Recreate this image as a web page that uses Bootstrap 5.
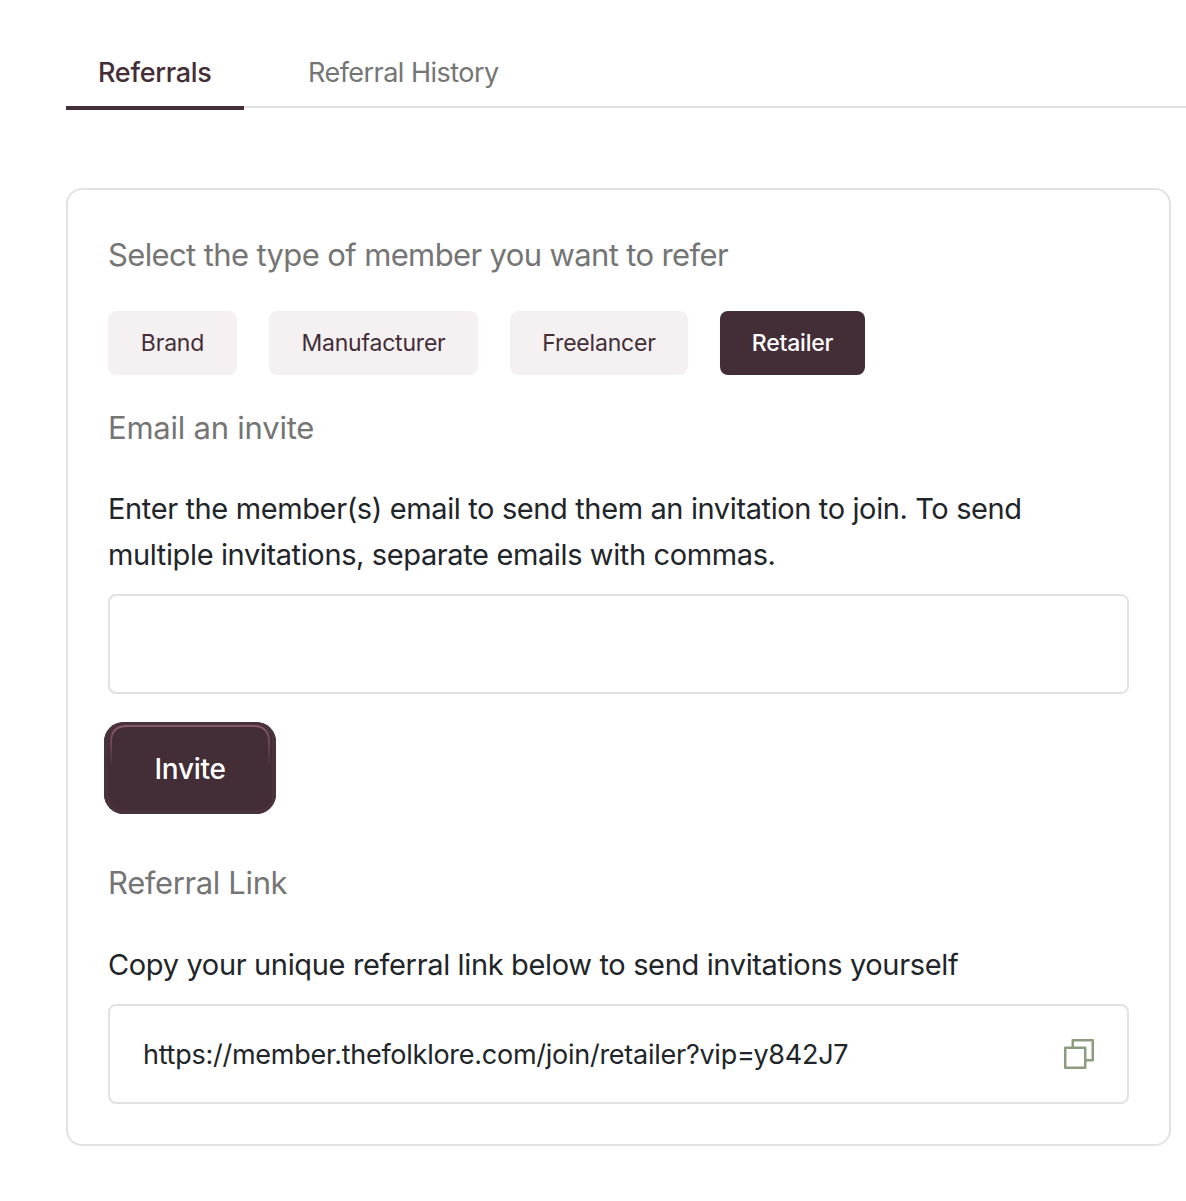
<!DOCTYPE html>
<html lang="en">
<head>
<meta charset="utf-8">
<meta name="viewport" content="width=device-width, initial-scale=1">
<title>Referrals</title>
<link href="https://cdn.jsdelivr.net/npm/bootstrap@5.3.0/dist/css/bootstrap.min.css" rel="stylesheet">
<style>
body{font-family:Inter,"Liberation Sans",sans-serif;color:#212529;background:#fff;min-height:1201px;overflow-x:hidden}
.page-wrap{padding:38px 0 0 66px}
.tab-bar{gap:32px;height:70px;box-shadow:inset 0 -2px #e2e2e2}
.tab-bar .nav-link{height:72px;padding:0 32px;line-height:70px;font-size:27px;color:#757575;border-radius:0;white-space:nowrap;letter-spacing:-.53px}
.tab-bar .nav-link.active{width:178px;color:#432d36;font-weight:500;border-bottom:4px solid #432d36;letter-spacing:-.28px}
.refer-card{width:1105px;height:958px;margin-top:80px;padding:41px 40px 40px;border:2px solid #e2e2e2;border-radius:16px}
.section-title{font-size:31px;line-height:48px;font-weight:400;color:#757575;margin:0;letter-spacing:-.63px;white-space:nowrap}
.t-email{margin-top:29px;letter-spacing:-.23px}
.t-link{margin-top:45px;letter-spacing:-.37px}
.body-copy{font-size:29px;line-height:46px;white-space:nowrap;letter-spacing:-.38px}
.c-email{margin:34px 0 16px}
.c-link{margin:35px 0 16px;letter-spacing:-.35px}
.type-list{gap:32px;margin-top:32px}
.type-btn{height:64px;padding:0;border:0;border-radius:8px;font-size:23px;line-height:64px;background:#f5f1f3;color:#432d36;letter-spacing:-.2px}
.type-btn.active{background:#432d36!important;color:#fff!important;font-weight:500}
.type-a{width:129px}.type-b{width:209px}.type-c{width:178px}.type-d{width:145px}
.field-box{height:100px;border:2px solid #e2e2e2;border-radius:8px;padding:0 33px}
.invite-btn{width:172px;height:92px;margin:28px 0 0 -4px;padding:2px 0 0;border:0;border-radius:20px;background:#432d36;color:#fff;font-size:28px;font-weight:500;letter-spacing:-.3px;box-shadow:inset 0 0 0 4px #4a323c}
.invite-btn:hover{background:#432d36;color:#fff}
.invite-btn .sheen{left:5px;top:2px}
.link-text{font-size:27px;letter-spacing:-.26px;white-space:nowrap;padding-top:2px}
</style>
</head>
<body>
<main class="page-wrap">
  <ul class="nav tab-bar flex-nowrap">
    <li class="nav-item"><a class="nav-link active" href="#">Referrals</a></li>
    <li class="nav-item"><a class="nav-link" href="#">Referral History</a></li>
  </ul>
  <section class="refer-card d-flex flex-column">
    <h2 class="section-title">Select the type of member you want to refer</h2>
    <div class="type-list d-flex">
      <button type="button" class="btn type-btn type-a">Brand</button>
      <button type="button" class="btn type-btn type-b">Manufacturer</button>
      <button type="button" class="btn type-btn type-c">Freelancer</button>
      <button type="button" class="btn type-btn type-d active">Retailer</button>
    </div>
    <h2 class="section-title t-email">Email an invite</h2>
    <p class="body-copy c-email">Enter the member(s) email to send them an invitation to join. To send<br>multiple invitations, separate emails with commas.</p>
    <input type="email" multiple class="form-control field-box" aria-label="Emails">
    <div><button type="button" class="btn invite-btn position-relative">
      <svg class="sheen position-absolute" width="162" height="46" viewBox="0 0 162 46" fill="none" aria-hidden="true"><defs><linearGradient id="fade" x1="0" y1="0" x2="0" y2="44" gradientUnits="userSpaceOnUse"><stop stop-color="#875a6c"/><stop offset="1" stop-color="#432d36"/></linearGradient></defs><path d="M2 45V18Q2 2 18 2H144Q160 2 160 18V45" stroke="url(#fade)" stroke-width="2"/></svg>
      Invite</button></div>
    <h2 class="section-title t-link">Referral Link</h2>
    <p class="body-copy c-link">Copy your unique referral link below to send invitations yourself</p>
    <div class="field-box d-flex align-items-center justify-content-between">
      <span class="link-text">https://member.thefolklore.com/join/retailer?vip=y842J7</span>
      <svg width="30" height="30" viewBox="0 0 30 30" fill="none" stroke="#8c9c7e" stroke-width="2.5" stroke-linejoin="round" aria-hidden="true"><path d="M8.75 8V1.25H28.75V21.25H22"/><path d="M1.25 8.75H21.25V28.75H1.25Z"/></svg>
    </div>
  </section>
</main>
<script src="https://cdn.jsdelivr.net/npm/bootstrap@5.3.0/dist/js/bootstrap.bundle.min.js"></script>
</body>
</html>
